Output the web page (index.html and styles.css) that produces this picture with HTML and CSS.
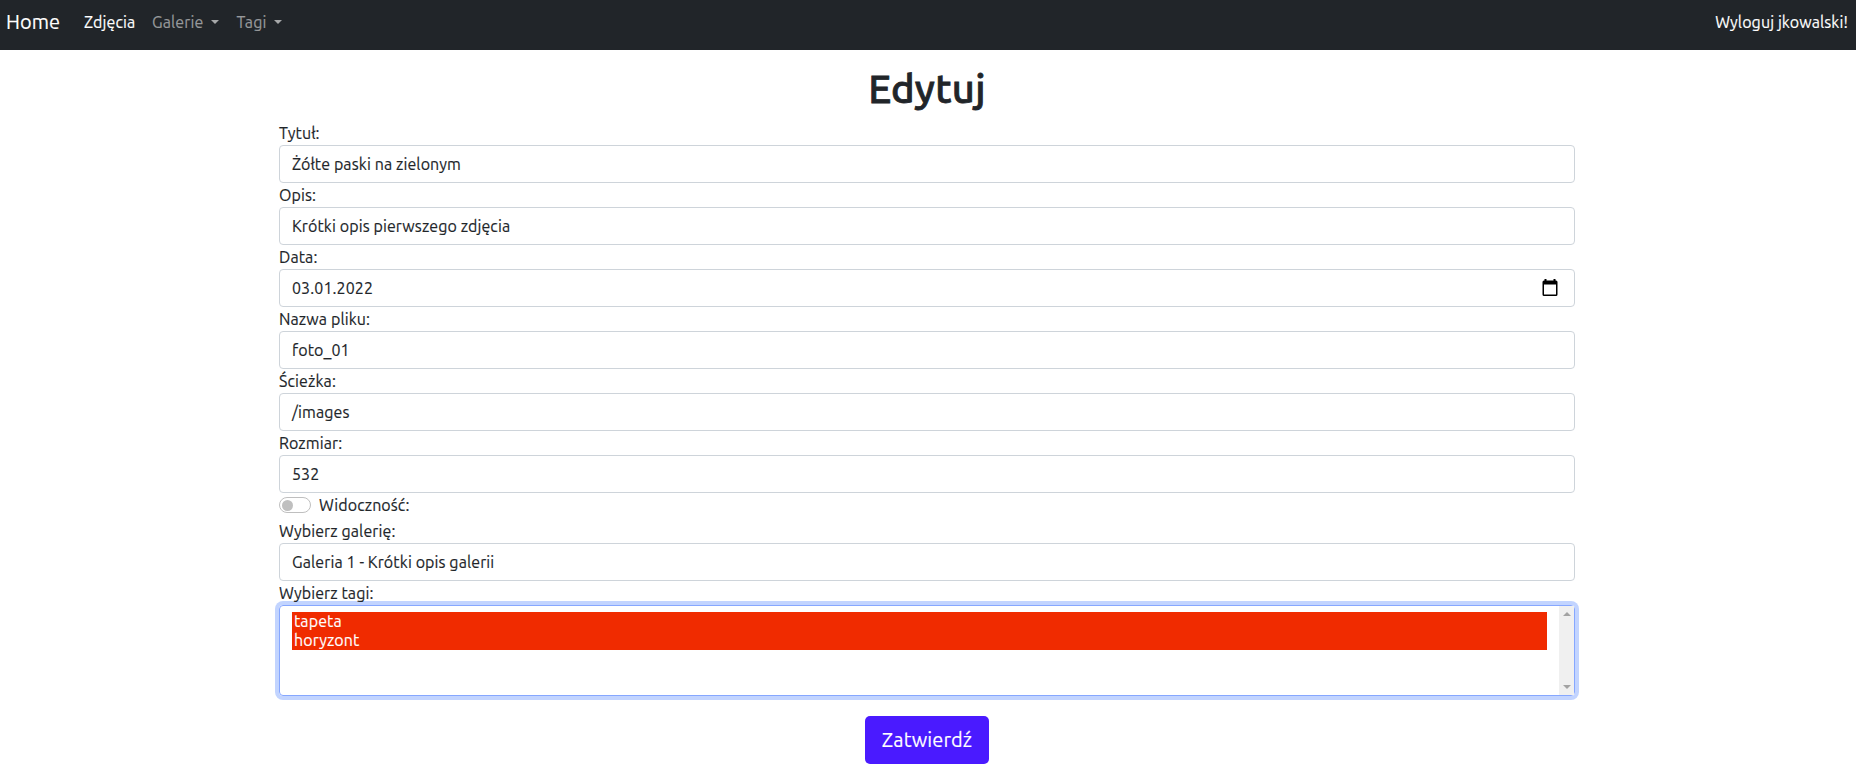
FILE: index.html
```html
<!DOCTYPE html>
<html lang="pl">
<head>
<meta charset="utf-8">
<title>Edytuj</title>
<link rel="stylesheet" href="styles.css">
</head>
<body>
<nav class="navbar">
  <a class="brand">Home</a>
  <a class="nav-link active photos">Zdjęcia</a>
  <a class="nav-link dropdown galleries"><span>Galerie</span></a>
  <a class="nav-link dropdown tags"><span>Tagi</span></a>
  <a class="logout"><span>Wyloguj jkowalski!</span></a>
</nav>
<main class="container">
  <h1><span>Edytuj</span></h1>
  <form class="form">
    <label>Tytuł:</label>
    <div class="control"><span>Żółte paski na zielonym</span></div>
    <label>Opis:</label>
    <div class="control"><span>Krótki opis pierwszego zdjęcia</span></div>
    <label>Data:</label>
    <div class="control date"><span>03.01.2022</span>
      <svg class="calendar" width="16" height="18" viewBox="0 0 16 18"><path fill="#000" fill-rule="evenodd" d="M2.5 0h2v1.500h7V0h2v1.500H14q1.500 0 1.500 1.500v12.500q0 1.500-1.500 1.500H2Q.5 17 .5 15.500V3Q.5 1.500 2 1.500h.5zM2 5.500v10h12v-10z"/></svg>
    </div>
    <label>Nazwa pliku:</label>
    <div class="control"><span>foto_01</span></div>
    <label>Ścieżka:</label>
    <div class="control"><span>/images</span></div>
    <label>Rozmiar:</label>
    <div class="control"><span>532</span></div>
    <div class="switch-row"><i class="switch"></i><span>Widoczność:</span></div>
    <label>Wybierz galerię:</label>
    <div class="control"><span>Galeria 1 - Krótki opis galerii</span></div>
    <label>Wybierz tagi:</label>
    <div class="listbox">
      <div class="options"><div class="option">tapeta</div><div class="option">horyzont</div></div>
      <div class="scrollbar"><i class="arrow up"></i><i class="arrow down"></i></div>
    </div>
    <button class="submit" type="button">Zatwierdź</button>
  </form>
</main>
</body>
</html>
```
FILE: styles.css
```css
* { box-sizing: border-box; }
body {
  margin: 0;
  background: #fff;
  color: #212529;
  font: 16px/24px Ubuntu, "Noto Sans", sans-serif;
  letter-spacing: 0.1px;
  -webkit-text-stroke: 0.15px currentColor;
}
.navbar {
  display: flex;
  height: 50px;
  padding: 7px 8px 0 6px;
  background: #212529;
  color: #fff;
  line-height: 30px;
}
.brand { width: 78px; font-size: 20px; letter-spacing: 0; }
.nav-link { color: #97999b; }
.nav-link.active { color: #fff; }
.photos { width: 68px; }
.galleries { width: 84.5px; }
.dropdown { display: flex; height: 30px; align-items: center; }
.dropdown::after {
  content: "";
  margin-left: 7.5px;
  margin-top: -1px;
  border: 4.800px solid transparent;
  border-width: 4px 4.800px 0;
  border-top-color: #a6a8a9;
}
.logout { margin-left: auto; }
.container { width: 1296px; margin-left: 279px; padding-top: 15px; }
h1 {
  margin: 0 0 8px;
  font-size: 40px;
  font-weight: 500;
  line-height: 48px;
  text-align: center;
  letter-spacing: 0.2px;
  -webkit-text-stroke: 0.8px currentColor;
}
.form { display: flex; flex-direction: column; }
label { position: relative; z-index: 1; height: 24px; }
.control {
  display: flex;
  align-items: center;
  justify-content: space-between;
  height: 38px;
  padding: 0 12px;
  border: 1px solid #ced4da;
  border-radius: 4px;
}
.calendar { margin-right: 4px; margin-top: -1px; }
.switch-row { display: flex; height: 26px; }
.switch {
  width: 32px;
  height: 16px;
  margin: 4px 8px 0 0;
  padding: 1.500px 2px;
  border: 1px solid #bfbfbf;
  border-radius: 8px;
}
.switch::before { content: ""; display: block; width: 11px; height: 11px; border-radius: 50%; background: #bfbfbf; }
.listbox {
  display: flex;
  height: 91px;
  border: 1px solid #86a7ff;
  border-radius: 4px;
  box-shadow: 0 0 0 4px #c2d4ff;
}
.options { flex: 1; padding: 6px 12px; }
.option { height: 19px; padding: 0 2px; background: #f02b00; color: #fff; line-height: 19px; }
.scrollbar {
  display: flex;
  flex-direction: column;
  align-items: center;
  justify-content: space-between;
  width: 15px;
  padding: 6px 0;
  background: #f0f0f0;
}
.arrow { border: 4px solid transparent; }
.up { border-top: 0; border-bottom-color: #a3a3a3; }
.down { border-bottom: 0; border-top-color: #a3a3a3; }
.submit {
  align-self: center;
  width: 124px;
  height: 48px;
  margin-top: 20px;
  padding: 0;
  border: 0;
  border-radius: 5px;
  background: #4a1aff;
  color: #fff;
  font: inherit;
  font-size: 20px;
  letter-spacing: 0.1px;
}
```
